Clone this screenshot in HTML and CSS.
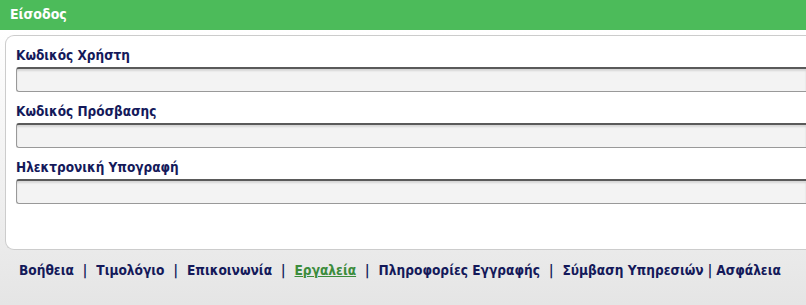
FILE: index.html
```html
<!DOCTYPE html>
<html lang="el">
<head>
<meta charset="utf-8">
<title>Είσοδος</title>
<link rel="stylesheet" href="styles.css">
</head>
<body>
<div class="header">Είσοδος</div>
<div class="page">
  <form class="card">
    <div class="field">
      <label class="label">Κωδικός Χρήστη</label>
      <div class="input"></div>
    </div>
    <div class="field">
      <label class="label">Κωδικός Πρόσβασης</label>
      <div class="input"></div>
    </div>
    <div class="field">
      <label class="label">Ηλεκτρονική Υπογραφή</label>
      <div class="input"></div>
    </div>
  </form>
  <nav class="links">
    <a class="link">Βοήθεια</a><span class="sep">|</span><a class="link">Τιμολόγιο</a><span class="sep">|</span><a class="link">Επικοινωνία</a><span class="sep">|</span><a class="link active">Εργαλεία</a><span class="sep">|</span><a class="link">Πληροφορίες Εγγραφής</a><span class="sep">|</span><a class="link">Σύμβαση Υπηρεσιών</a><span class="sep tight">|</span><a class="link">Ασφάλεια</a>
  </nav>
</div>
</body>
</html>
```
FILE: styles.css
```css
html, body {
  margin: 0;
  padding: 0;
  height: 100%;
}
body {
  font-family: "DejaVu Sans Condensed", "DejaVu Sans", Verdana, sans-serif;
  font-stretch: condensed;
  background: linear-gradient(to bottom, #ffffff 0px, #ffffff 30px, #e5e5e5 305px);
  overflow: hidden;
}
.header {
  height: 30px;
  background: #4cbb5a;
  color: #ffffff;
  font-weight: bold;
  font-size: 14px;
  line-height: 28px;
  padding-left: 10px;
}
.page {
  padding: 5px 0 0 5px;
}
.card {
  display: flex;
  flex-direction: column;
  gap: 11px;
  margin: 0;
  height: 172px;
  background: #ffffff;
  border: 1px solid #cccccc;
  border-right: none;
  border-radius: 9px 0 0 9px;
  padding: 11px 0 30px 10px;
}
.field {
  display: flex;
  flex-direction: column;
  gap: 4px;
}
.label {
  color: #14195a;
  font-weight: bold;
  font-size: 13.5px;
  line-height: 16px;
}
.input {
  height: 22px;
  background: #f3f3f3;
  border: 1px solid #999999;
  border-top: 2px solid #5a5a5a;
  border-right: none;
  border-radius: 3px 0 0 3px;
  box-shadow: inset 0 2px 2px rgba(0, 0, 0, 0.12);
}
.links {
  display: flex;
  align-items: baseline;
  padding: 12px 0 0 14px;
  font-size: 13.6px;
  font-weight: bold;
  line-height: 16px;
  color: #14195a;
}
.link {
  color: #14195a;
}
.link.active {
  color: #3c8c3c;
  text-decoration: underline;
}
.sep {
  color: #14195a;
  padding: 0 9px;
}
.sep.tight {
  padding: 0 4px;
}
```
